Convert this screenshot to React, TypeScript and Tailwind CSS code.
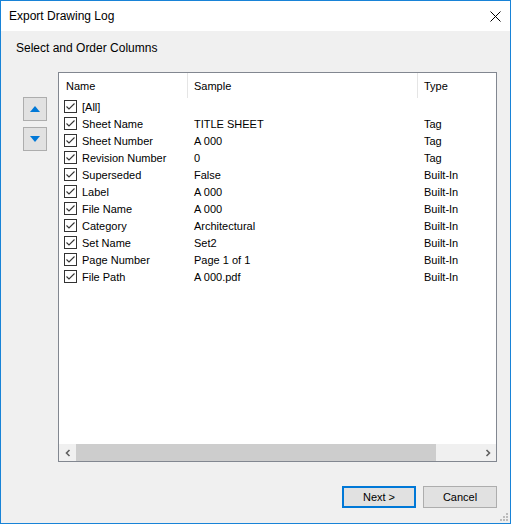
import React from 'react'

const rows: [string, string, string][] = [
  ['Sheet Name', 'TITLE SHEET', 'Tag'],
  ['Sheet Number', 'A 000', 'Tag'],
  ['Revision Number', '0', 'Tag'],
  ['Superseded', 'False', 'Built-In'],
  ['Label', 'A 000', 'Built-In'],
  ['File Name', 'A 000', 'Built-In'],
  ['Category', 'Architectural', 'Built-In'],
  ['Set Name', 'Set2', 'Built-In'],
  ['Page Number', 'Page 1 of 1', 'Built-In'],
  ['File Path', 'A 000.pdf', 'Built-In'],
]

function Check() {
  return (
    <span className="w-[13px] h-[13px] border border-[#333333] bg-white flex items-center justify-center shrink-0">
      <svg width="11" height="11" viewBox="0 0 11 11">
        <path d="M1.5 5.5 L4 8 L9.5 2.5" fill="none" stroke="#333333" strokeWidth="1.1" />
      </svg>
    </span>
  )
}

function Row({ name, sample, type }: { name: string; sample: string; type: string }) {
  return (
    <div className="flex h-[17px] items-center">
      <div className="w-[129px] flex items-center pl-[5px] gap-[5px] shrink-0">
        <Check />
        <span className="whitespace-nowrap pt-[1px]">{name}</span>
      </div>
      <div className="w-[230px] pl-[6px] pt-[1px] shrink-0 whitespace-nowrap">{sample}</div>
      <div className="pl-[6px] pt-[1px] whitespace-nowrap">{type}</div>
    </div>
  )
}

function App() {
  return (
    <div
      className="w-[511px] h-[524px] border border-[#1883d7] flex flex-col text-[12px] text-black bg-[#f0f0f0] overflow-hidden"
      style={{ fontFamily: '"Segoe UI", "Liberation Sans", Arial, sans-serif' }}
    >
      {/* Title bar */}
      <div className="h-[30px] bg-white flex items-center justify-between pl-[8px] pr-[9px] shrink-0">
        <span className="leading-none">Export Drawing Log</span>
        <svg width="11" height="11" viewBox="0 0 11 11">
          <path d="M0.5 0.5 L10.5 10.5 M10.5 0.5 L0.5 10.5" stroke="#000" strokeWidth="1" />
        </svg>
      </div>

      {/* Body */}
      <div className="flex-1 flex flex-col relative">
        <div className="pl-[15px] pt-[9px] h-[41px] leading-[16px]">Select and Order Columns</div>

        <div className="flex pr-[13px] text-[11px]">
          <div className="flex flex-col gap-[6px] pl-[22px] pr-[11px] pt-[25px]">
            <button className="w-[24px] h-[24px] bg-[#e1e1e1] border border-[#adadad] flex items-center justify-center">
              <svg width="10" height="6" viewBox="0 0 10 6">
                <path d="M5 0 L10 6 L0 6 Z" fill="#0078d7" />
              </svg>
            </button>
            <button className="w-[24px] h-[24px] bg-[#e1e1e1] border border-[#adadad] flex items-center justify-center">
              <svg width="10" height="6" viewBox="0 0 10 6">
                <path d="M0 0 L10 0 L5 6 Z" fill="#0078d7" />
              </svg>
            </button>
          </div>

          {/* List view */}
          <div className="w-[439px] h-[390px] border border-[#828790] bg-white flex flex-col">
            <div className="flex-1 overflow-hidden">
              <div className="flex h-[25px] items-center">
                <div className="w-[129px] h-full pl-[7px] pt-[2px] flex items-center border-r border-[#e5e5e5] shrink-0">Name</div>
                <div className="w-[230px] h-full pl-[6px] pt-[2px] flex items-center border-r border-[#e5e5e5] shrink-0">Sample</div>
                <div className="pl-[6px] h-full pt-[2px] flex items-center">Type</div>
              </div>
              <Row name="[All]" sample="" type="" />
              {rows.map(([n, s, t]) => (
                <Row key={n} name={n} sample={s} type={t} />
              ))}
            </div>

            {/* Horizontal scrollbar */}
            <div className="h-[17px] bg-[#f0f0f0] flex items-center shrink-0">
              <div className="w-[17px] h-full flex items-center justify-center">
                <svg width="8" height="8" viewBox="0 0 8 8">
                  <path d="M5.5 1 L2.5 4 L5.5 7" fill="none" stroke="#606060" strokeWidth="1.6" />
                </svg>
              </div>
              <div className="flex-1 h-full flex">
                <div className="w-[360px] h-full bg-[#cdcdcd]" />
              </div>
              <div className="w-[17px] h-full flex items-center justify-center">
                <svg width="8" height="8" viewBox="0 0 8 8">
                  <path d="M2.5 1 L5.5 4 L2.5 7" fill="none" stroke="#606060" strokeWidth="1.6" />
                </svg>
              </div>
            </div>
          </div>
        </div>

        {/* Buttons */}
        <div className="flex justify-end gap-[7px] pr-[13px] pt-[24px] text-[11px]">
          <button className="w-[74px] h-[22px] bg-[#e1e1e1] border-2 border-[#0078d7] flex items-center justify-center leading-none">
            Next &gt;
          </button>
          <button className="w-[74px] h-[22px] bg-[#e1e1e1] border border-[#adadad] flex items-center justify-center leading-none">
            Cancel
          </button>
        </div>

        {/* Resize grip */}
        <svg className="absolute right-[1px] bottom-[1px]" width="10" height="10" viewBox="0 0 10 10">
          <rect x="7" y="1" width="2" height="2" fill="#bcbcbc" />
          <rect x="4" y="4" width="2" height="2" fill="#bcbcbc" />
          <rect x="7" y="4" width="2" height="2" fill="#bcbcbc" />
          <rect x="1" y="7" width="2" height="2" fill="#bcbcbc" />
          <rect x="4" y="7" width="2" height="2" fill="#bcbcbc" />
          <rect x="7" y="7" width="2" height="2" fill="#bcbcbc" />
        </svg>
      </div>
    </div>
  )
}

export default App
